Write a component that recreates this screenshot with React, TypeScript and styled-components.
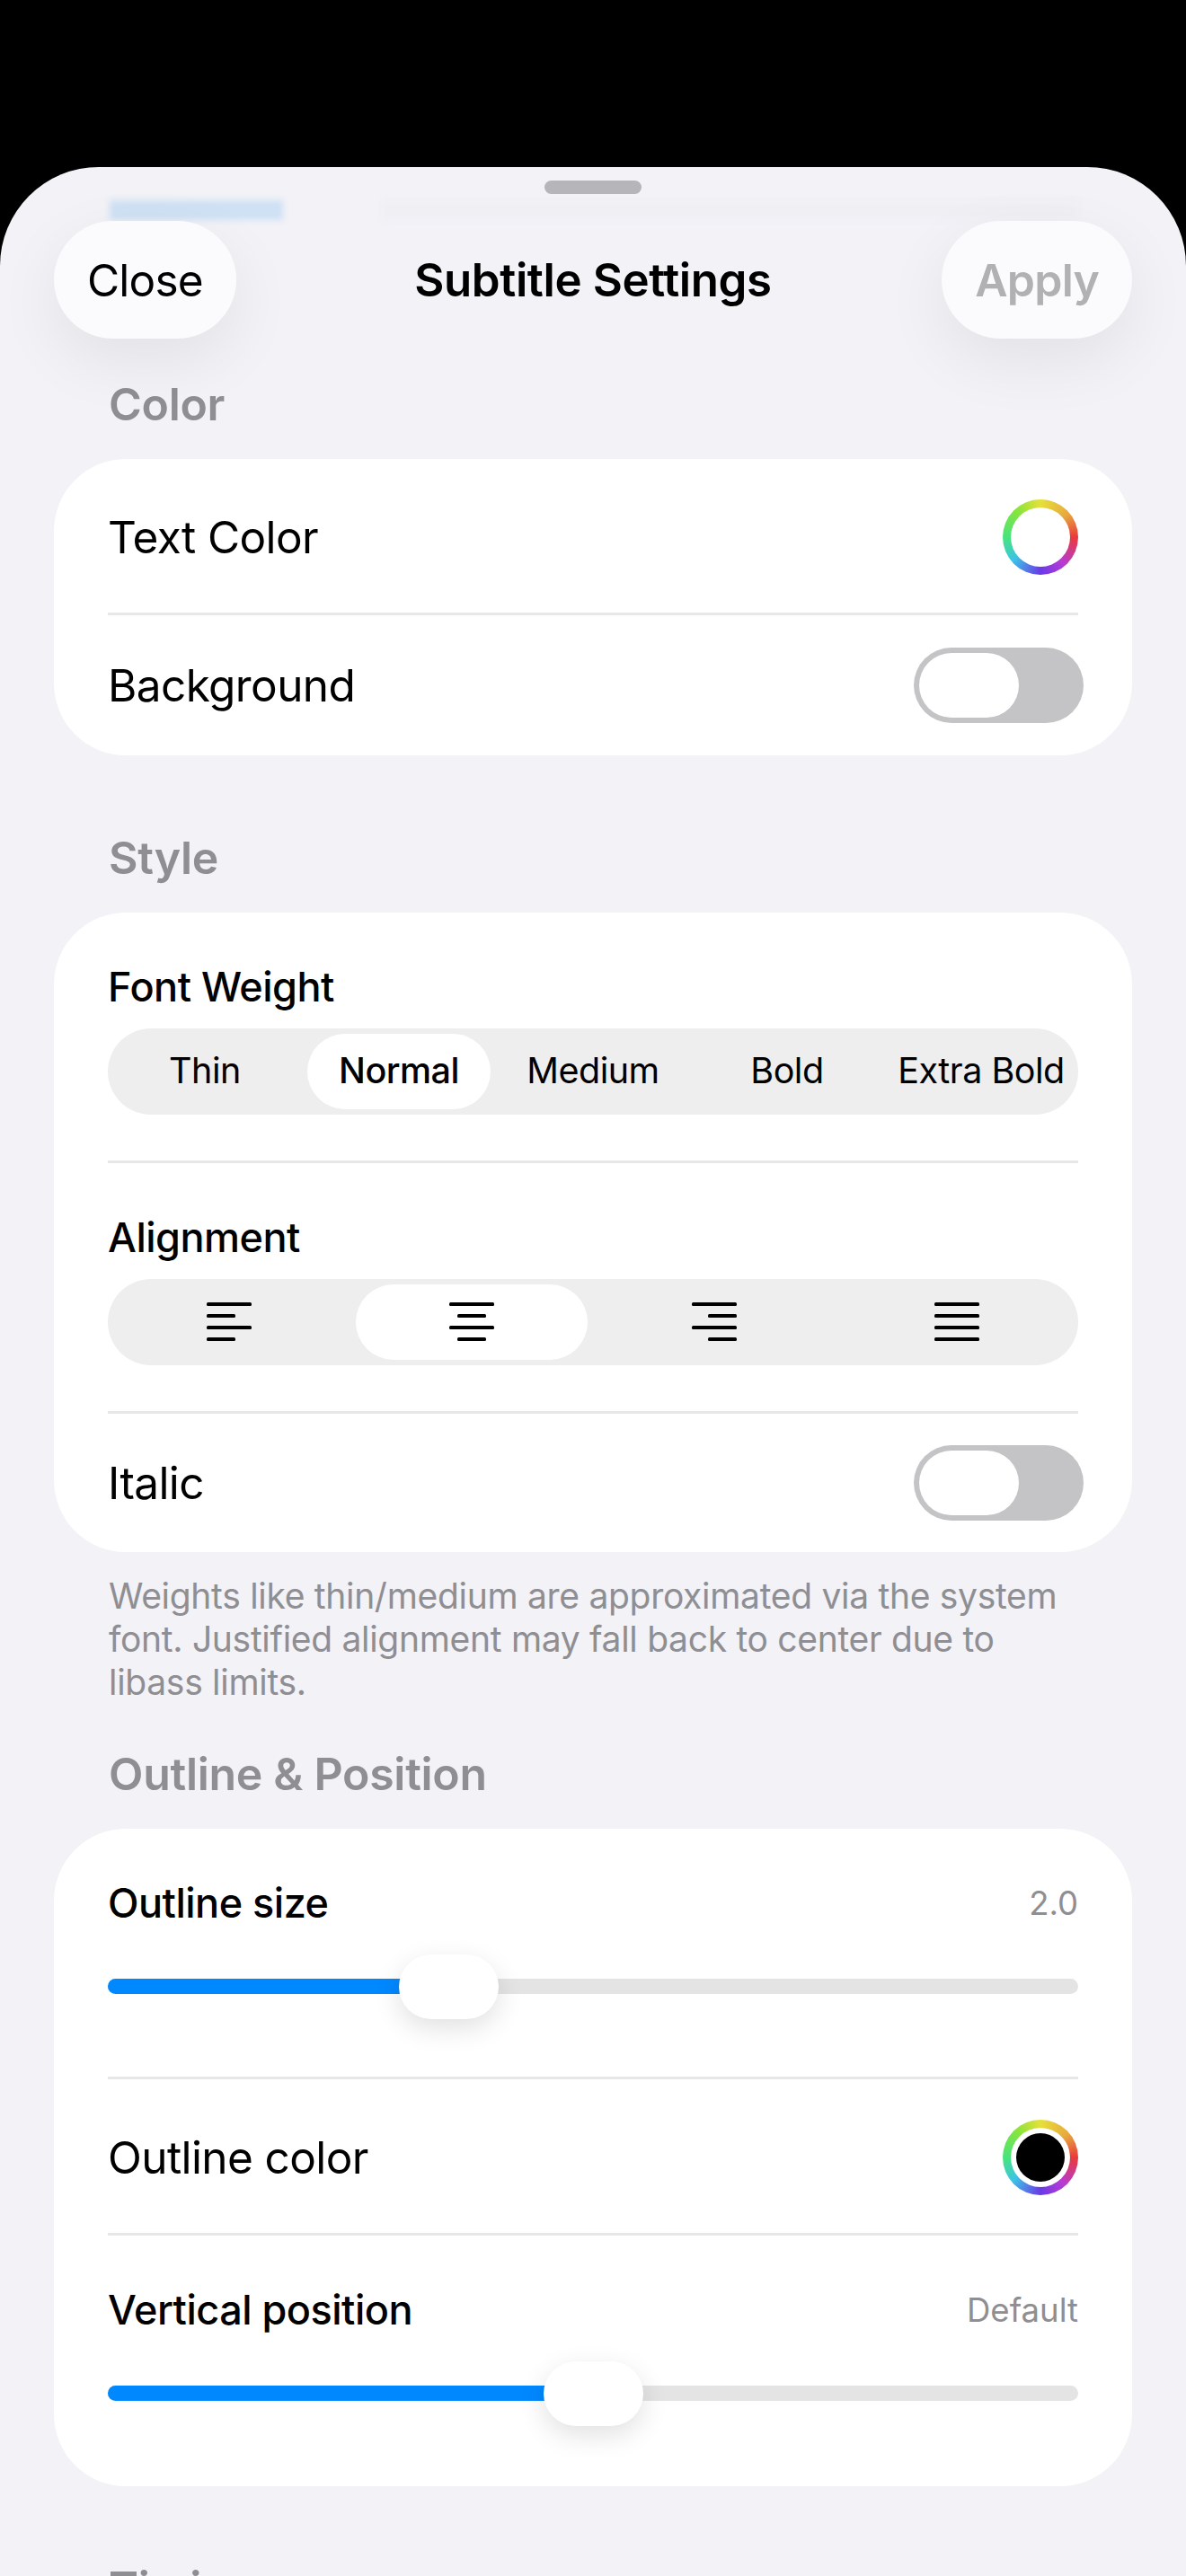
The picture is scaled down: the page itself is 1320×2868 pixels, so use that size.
import React from "react";
import styled, { createGlobalStyle } from "styled-components";

const GlobalStyle = createGlobalStyle`
  html, body {
    margin: 0;
    padding: 0;
    background: #000;
  }
  * {
    box-sizing: border-box;
  }
`;

type Align = "left" | "center" | "right" | "justify";

const AlignIcon: React.FC<{ align: Align }> = ({ align }) => {
  const short = align === "justify" ? 50 : 32;
  const x = align === "left" || align === "justify" ? 0 : align === "center" ? 9 : 18;
  const lines = [
    { y: 2, x1: 0, w: 50 },
    { y: 15, x1: x, w: short },
    { y: 28, x1: 0, w: 50 },
    { y: 41, x1: x, w: short },
  ];
  return (
    <svg width="50" height="43" viewBox="0 0 50 43">
      {lines.map((l) => (
        <rect key={l.y} x={l.x1} y={l.y - 2} width={l.w} height="4" rx="1.5" fill="#000" />
      ))}
    </svg>
  );
};

const Slider: React.FC<{ percent: number }> = ({ percent }) => (
  <Track>
    <Fill $percent={percent} />
    <Thumb $percent={percent} />
  </Track>
);

const App: React.FC = () => {
  return (
    <Screen>
      <GlobalStyle />
      <Sheet>
        <BlurredBar $left={122} $width={193} $color="#cfe1f4" />
        <BlurredBar $left={425} $width={775} $color="#f0f0f4" />
        <Grabber />
        <Toolbar>
          <BarButton>Close</BarButton>
          <Title>Subtitle Settings</Title>
          <BarButton $disabled>Apply</BarButton>
        </Toolbar>

        <Content>
          <SectionTitle>Color</SectionTitle>
          <Card>
            <Row $height={171} $offset={3}>
              <RowLabel>Text Color</RowLabel>
              <ColorRing />
            </Row>
            <Divider />
            <Row $height={156}>
              <RowLabel>Background</RowLabel>
              <Toggle>
                <ToggleKnob />
              </Toggle>
            </Row>
          </Card>

          <SectionTitle $top={84}>Style</SectionTitle>
          <Card>
            <Block>
              <BlockLabel>Font Weight</BlockLabel>
              <Segmented>
                <Segment>Thin</Segment>
                <Segment $active>Normal</Segment>
                <Segment>Medium</Segment>
                <Segment>Bold</Segment>
                <Segment>Extra Bold</Segment>
              </Segmented>
            </Block>
            <Divider />
            <Block>
              <BlockLabel>Alignment</BlockLabel>
              <Segmented>
                <Segment>
                  <AlignIcon align="left" />
                </Segment>
                <Segment $active>
                  <AlignIcon align="center" />
                </Segment>
                <Segment>
                  <AlignIcon align="right" />
                </Segment>
                <Segment>
                  <AlignIcon align="justify" />
                </Segment>
              </Segmented>
            </Block>
            <Divider />
            <Row $height={154}>
              <RowLabel>Italic</RowLabel>
              <Toggle>
                <ToggleKnob />
              </Toggle>
            </Row>
          </Card>
          <Footnote>
            Weights like thin/medium are approximated via the system font. Justified alignment may
            fall back to center due to libass limits.
          </Footnote>

          <SectionTitle $top={48}>Outline &amp; Position</SectionTitle>
          <Card>
            <SliderBlock>
              <SliderHead>
                <BlockLabel>Outline size</BlockLabel>
                <SliderValue>2.0</SliderValue>
              </SliderHead>
              <Slider percent={35.1} />
            </SliderBlock>
            <Divider />
            <Row $height={171} $offset={3}>
              <RowLabel>Outline color</RowLabel>
              <ColorRing>
                <ColorDot />
              </ColorRing>
            </Row>
            <Divider />
            <SliderBlock $last>
              <SliderHead>
                <BlockLabel>Vertical position</BlockLabel>
                <SliderValue>Default</SliderValue>
              </SliderHead>
              <Slider percent={50} />
            </SliderBlock>
          </Card>

          <SectionTitle $top={83}>Timing</SectionTitle>
        </Content>
      </Sheet>
    </Screen>
  );
};

const Screen = styled.div`
  width: 1320px;
  height: 2868px;
  padding-top: 186px;
  overflow: hidden;
  background: #000;
  font-family: Inter, "Liberation Sans", sans-serif;
  color: #000;
`;

const Sheet = styled.div`
  position: relative;
  height: 2682px;
  overflow: hidden;
  background: #f2f2f7;
  border-radius: 110px 110px 0 0;
`;

const BlurredBar = styled.div<{ $left: number; $width: number; $color: string }>`
  position: absolute;
  top: 37px;
  left: ${(p) => p.$left}px;
  width: ${(p) => p.$width}px;
  height: 22px;
  background: ${(p) => p.$color};
  filter: blur(3px);
`;

const Grabber = styled.div`
  position: absolute;
  top: 15px;
  left: 606px;
  width: 108px;
  height: 15px;
  border-radius: 8px;
  background: #b5b5ba;
`;

const Toolbar = styled.div`
  position: absolute;
  top: 60px;
  left: 60px;
  right: 60px;
  display: grid;
  grid-template-columns: 1fr auto 1fr;
  align-items: center;
`;

const BarButton = styled.div<{ $disabled?: boolean }>`
  justify-self: ${(p) => (p.$disabled ? "end" : "start")};
  height: 131px;
  padding: 0 37px;
  display: flex;
  align-items: center;
  border-radius: 66px;
  background: #fbfbfd;
  box-shadow: 0 24px 72px rgba(0, 0, 0, 0.07);
  font-size: ${(p) => (p.$disabled ? 50 : 49.5)}px;
  font-weight: ${(p) => (p.$disabled ? 600 : 400)};
  letter-spacing: -0.8px;
  color: ${(p) => (p.$disabled ? "#b1b1b3" : "#000")};
`;

const Title = styled.div`
  font-size: 51px;
  font-weight: 600;
  letter-spacing: -0.4px;
  line-height: 60px;
`;

const Content = styled.div`
  padding: 234px 60px 0;
`;

const SectionTitle = styled.div<{ $top?: number }>`
  margin-top: ${(p) => p.$top ?? 0}px;
  margin-bottom: 31px;
  padding-left: 61px;
  font-size: 50px;
  font-weight: 600;
  letter-spacing: -0.3px;
  line-height: 60px;
  color: #8e8e93;
`;

const Card = styled.div`
  padding: 0 60px;
  border-radius: 80px;
  background: #fff;
`;

const Row = styled.div<{ $height: number; $offset?: number }>`
  height: ${(p) => p.$height}px;
  padding-top: ${(p) => p.$offset ?? 0}px;
  display: flex;
  align-items: center;
  justify-content: space-between;
`;

const RowLabel = styled.div`
  font-size: 49.5px;
  letter-spacing: -0.6px;
`;

const Divider = styled.div`
  height: 3px;
  background: #e7e7e8;
`;

const ColorRing = styled.div`
  width: 84px;
  height: 84px;
  padding: 9px;
  border-radius: 50%;
  background: conic-gradient(
    #e6e03a 0deg,
    #e8a83e 50deg,
    #e93a3c 90deg,
    #b63ad6 140deg,
    #6a3ae6 180deg,
    #3cc4e6 230deg,
    #48e47c 270deg,
    #8ae43c 320deg,
    #e6e03a 360deg
  );
  display: flex;
  align-items: center;
  justify-content: center;
  position: relative;

  &::before {
    content: "";
    position: absolute;
    inset: 9px;
    border-radius: 50%;
    background: #fff;
  }
`;

const ColorDot = styled.div`
  position: relative;
  width: 54px;
  height: 54px;
  border-radius: 50%;
  background: #000;
`;

const Toggle = styled.div`
  width: 189px;
  height: 84px;
  margin-right: -6px;
  padding: 6px;
  border-radius: 42px;
  background: #c4c4c6;
`;

const ToggleKnob = styled.div`
  width: 111px;
  height: 72px;
  border-radius: 36px;
  background: #fff;
`;

const Block = styled.div`
  padding: 56px 0 51px;
`;

const BlockLabel = styled.div`
  font-size: 45px;
  font-weight: 500;
  letter-spacing: -0.5px;
  line-height: 54px;
`;

const Segmented = styled.div`
  display: flex;
  height: 96px;
  margin-top: 19px;
  padding: 6px 0;
  border-radius: 48px;
  background: #eeeeee;
`;

const Segment = styled.div<{ $active?: boolean }>`
  flex: 1 1 0;
  min-width: 0;
  margin: 0 6px;
  padding-bottom: 2px;
  display: flex;
  align-items: center;
  justify-content: center;
  border-radius: 42px;
  white-space: nowrap;
  background: ${(p) => (p.$active ? "#fff" : "transparent")};
  font-size: 39.5px;
  font-weight: ${(p) => (p.$active ? 500 : 400)};
  letter-spacing: -0.5px;
`;

const Footnote = styled.div`
  margin-top: 25px;
  padding: 0 60px 0 61px;
  font-size: 39px;
  line-height: 48px;
  letter-spacing: -0.3px;
  color: #8e8e93;
`;

const SliderBlock = styled.div<{ $last?: boolean }>`
  padding: 56px 0 ${(p) => (p.$last ? 95 : 92)}px;
`;

const SliderHead = styled.div`
  display: flex;
  align-items: center;
  justify-content: space-between;
  margin-bottom: 57px;
`;

const SliderValue = styled.div`
  font-size: 36.5px;
  color: #8e8e93;
`;

const Track = styled.div`
  position: relative;
  height: 17px;
  border-radius: 9px;
  background: #e4e4e4;
`;

const Fill = styled.div<{ $percent: number }>`
  width: ${(p) => p.$percent}%;
  height: 100%;
  border-radius: 9px 0 0 9px;
  background: #0088ff;
`;

const Thumb = styled.div<{ $percent: number }>`
  position: absolute;
  top: -27px;
  left: ${(p) => p.$percent}%;
  width: 111px;
  height: 72px;
  margin-left: -55px;
  border-radius: 36px;
  background: #fff;
  box-shadow: 0 10px 30px rgba(0, 0, 0, 0.12);
`;

export default App;
